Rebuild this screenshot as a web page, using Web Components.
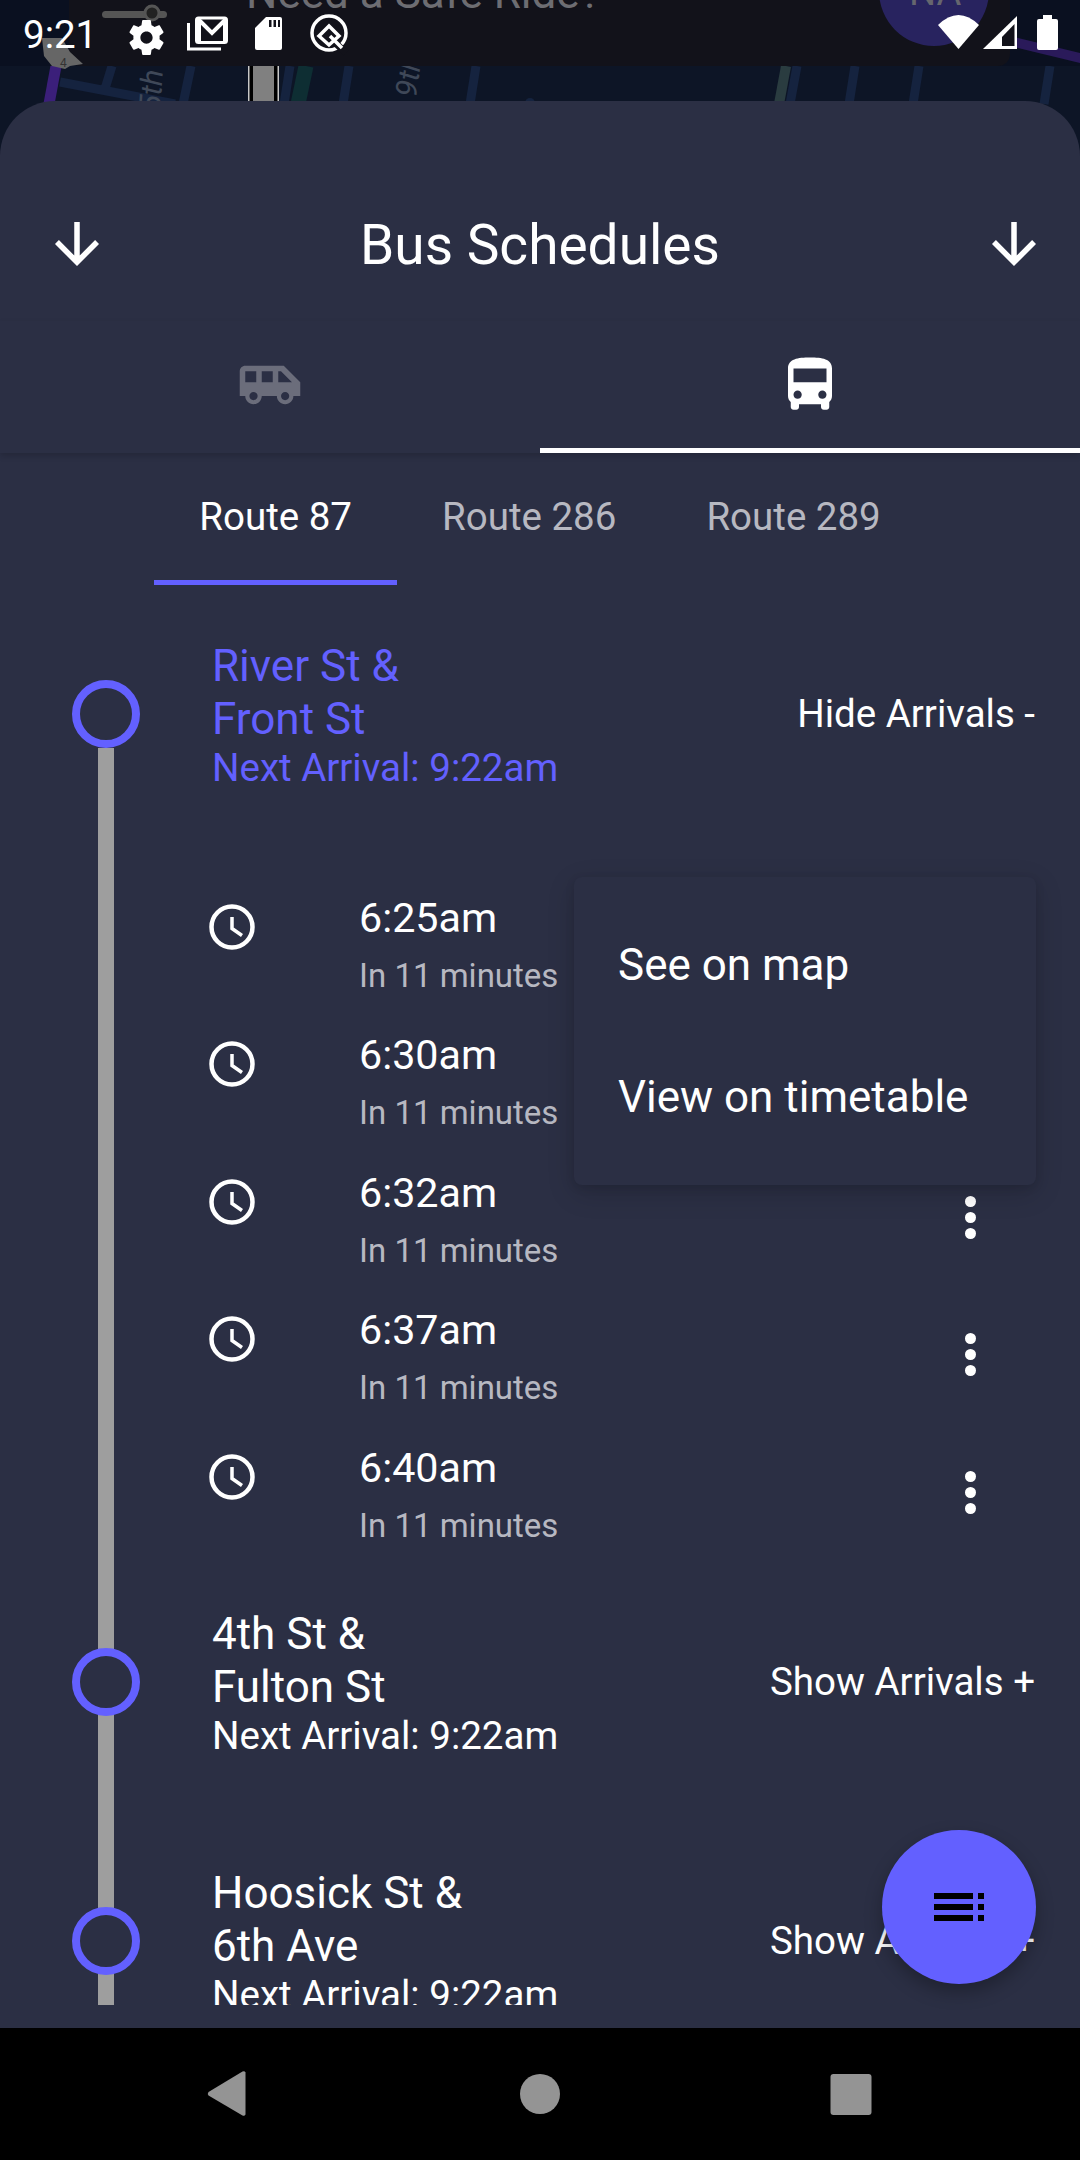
<!DOCTYPE html>
<html>
<head>
<meta charset="utf-8">
<title>Bus Schedules</title>
<style>
    html, body { margin: 0; padding: 0; background: #000; }
    body { font-family: Roboto, "Liberation Sans", sans-serif; }
</style>
</head>
<body>
<bus-app></bus-app>
<script>
const ARROW = 'M20 12l-1.41-1.41L13 16.17V4h-2v12.17l-5.58-5.59L4 12l8 8 8-8z';
const BUS = 'M4 16c0 .88.39 1.67 1 2.22V20c0 .55.45 1 1 1h1c.55 0 1-.45 1-1v-1h8v1c0 .55.45 1 1 1h1c.55 0 1-.45 1-1v-1.78c.61-.55 1-1.34 1-2.22V6c0-3.5-3.58-4-8-4s-8 .5-8 4v10zm3.5 1c-.83 0-1.5-.67-1.5-1.5S6.67 14 7.5 14s1.5.67 1.5 1.5S8.33 17 7.5 17zm9 0c-.83 0-1.5-.67-1.5-1.5s.67-1.5 1.5-1.5 1.5.67 1.5 1.5-.67 1.5-1.5 1.5zm1.5-6H6V6h12v5z';
const VAN = 'M17 5H3c-1.1 0-2 .89-2 2v9h2c0 1.65 1.34 3 3 3s3-1.35 3-3h5.5c0 1.65 1.34 3 3 3s3-1.35 3-3H23v-5l-6-6zM3 11V7h4v4H3zm3 6.5c-.83 0-1.5-.67-1.5-1.5s.67-1.5 1.5-1.5 1.5.67 1.5 1.5-.67 1.5-1.5 1.5zM13 11H9V7h4v4zm4.5 6.5c-.83 0-1.5-.67-1.5-1.5s.67-1.5 1.5-1.5 1.5.67 1.5 1.5-.67 1.5-1.5 1.5zM15 11V7h1l4 4h-5z';
const GEAR = 'M19.43 12.98c.04-.32.07-.64.07-.98s-.03-.66-.07-.98l2.11-1.65c.19-.15.24-.42.12-.64l-2-3.46c-.12-.22-.39-.3-.61-.22l-2.49 1c-.52-.4-1.08-.73-1.69-.98l-.38-2.65C14.46 2.18 14.25 2 14 2h-4c-.25 0-.46.18-.49.42l-.38 2.65c-.61.25-1.17.59-1.69.98l-2.49-1c-.23-.09-.49 0-.61.22l-2 3.46c-.13.22-.07.49.12.64l2.11 1.65c-.04.32-.07.65-.07.98s.03.66.07.98l-2.11 1.65c-.19.15-.24.42-.12.64l2 3.46c.12.22.39.3.61.22l2.49-1c.52.4 1.08.73 1.69.98l.38 2.65c.03.24.24.42.49.42h4c.25 0 .46-.18.49-.42l.38-2.65c.61-.25 1.17-.59 1.69-.98l2.49 1c.23.09.49 0 .61-.22l2-3.46c.12-.22.07-.49-.12-.64l-2.11-1.65zM12 15.5c-1.93 0-3.5-1.57-3.5-3.5s1.57-3.5 3.5-3.5 3.5 1.57 3.5 3.5-1.57 3.5-3.5 3.5z';

// map behind the sheet, with the app's own dimmed header and the status icons on top
class MapPeek extends HTMLElement {
    constructor() {
        super();
        this.attachShadow({ mode: 'open' });
        this.shadowRoot.innerHTML = `
        <style>
            :host { display: block; height: 160px; margin-bottom: -59px; position: relative; overflow: hidden; background: #0d1526; }
            svg { display: block; }
            text { font-family: Roboto, "Liberation Sans", sans-serif; }
            .clock { position: absolute; left: 23px; top: 12px; font: 38.5px/45px Roboto, sans-serif; color: #fff; }
        </style>
        <svg width="1080" height="160" viewBox="0 0 1080 160">
            <g stroke="#15233f" stroke-width="9" fill="none">
                <path d="M112 66L104 92M60 82L175 104M191 66L183 104M290 66L284 104M349 66L343 104M476 66L470 104M797 66L790 104M855 66L849 104M919 66L913 104M1050 66L1044 104"/>
            </g>
            <path d="M786 66L779 104" stroke="#2a3c40" stroke-width="10"/>
            <path d="M306 66L298 104" stroke="#0e2e33" stroke-width="15"/>
            <path d="M56 66L49 104" stroke="#3b1f7a" stroke-width="11"/>
            <circle cx="530" cy="103" r="5" fill="#15233f"/>
            <rect x="248" y="66" width="31" height="40" fill="#c8c8c8"/>
            <rect x="249.5" y="66" width="28" height="40" fill="#000"/>
            <rect x="253" y="66" width="21" height="40" fill="#808080"/>
            <text transform="translate(160 112) rotate(-86)" font-size="30" font-style="italic" fill="#3f4858">5th</text>
            <text transform="translate(416 98) rotate(-82)" font-size="30" font-style="italic" fill="#3f4858">9th</text>

            <rect width="1080" height="66" fill="#0a1020"/>
            <path d="M1010 36L1080 53V63L1010 46z" fill="#2a1a5a"/>
            <rect x="69" y="-20" width="941" height="86" rx="12" fill="#12121a"/>
            <text x="246" y="8" font-size="44" fill="#6d6d72">Need a Safe Ride?</text>
            <circle cx="934" cy="-9" r="55" fill="#28235f"/>
            <text x="909" y="5" font-size="38" fill="#66666e">NA</text>
            <path d="M42 38H62L70 52L83 64L70 66L65 69L52 66L44 56z" fill="#666"/>
            <text x="60" y="67" font-size="12" fill="#333">4</text>
            <rect x="102" y="11" width="65" height="7" rx="3.5" fill="#555"/>
            <circle cx="152" cy="13" r="7" fill="#222" stroke="#555" stroke-width="3"/>

            <path d="${GEAR}" transform="translate(125.5 16.5) scale(1.75)" fill="#fff"/>
            <path d="M188.5 23V49H221" fill="none" stroke="#fff" stroke-width="3"/>
            <rect x="196.5" y="18" width="30" height="24.5" rx="2" fill="none" stroke="#fff" stroke-width="3"/>
            <path d="M199 19L199 42M225 19V42M198 19L212 33L226 19" fill="none" stroke="#fff" stroke-width="4"/>
            <path d="M266 17H280a2 2 0 0 1 2 2V48a2 2 0 0 1-2 2H257a2 2 0 0 1-2-2V28z" fill="#fff"/>
            <path d="M269 20h2.5v7H269zM273.5 20h2.5v7H273.5zM278 20h2v7H278z" fill="#12121a"/>
            <circle cx="329" cy="33" r="17" fill="none" stroke="#fff" stroke-width="3.5"/>
            <path d="M329 37L346 53" fill="none" stroke="#12121a" stroke-width="7"/>
            <path d="M319 36L329 26L339 36L329 45zM330 36L342 48" fill="none" stroke="#fff" stroke-width="3.5"/>
            <path d="M938 25Q958.5 5 979 25L958.5 49z" fill="#fff"/>
            <path d="M1017 16V49H983z" fill="#fff"/>
            <path d="M1002 37L1014.5 24V46H1002z" fill="#12121a"/>
            <path d="M1043 15H1052V19H1056a2 2 0 0 1 2 2V48a2 2 0 0 1-2 2H1039a2 2 0 0 1-2-2V21a2 2 0 0 1 2-2H1043z" fill="#fff"/>
        </svg>
        <div class="clock">9:21</div>
        `;
    }
}
customElements.define('map-peek', MapPeek);

class SheetHeader extends HTMLElement {
    constructor() {
        super();
        this.attachShadow({ mode: 'open' });
        this.shadowRoot.innerHTML = `
        <style>
            :host { display: grid; grid-template-columns: 1fr auto 1fr; align-items: center; padding: 110px 33px 44px; color: #fff; }
            h1 { margin: 0; font: 400 55px/66px Roboto, sans-serif; transform: translateY(1px); }
            svg { display: block; width: 66px; height: 66px; fill: #fff; }
            svg:first-of-type { margin-left: 11px; }
            svg:last-of-type { margin-left: 0; justify-self: end; }
        </style>
        <svg viewBox="0 0 24 24"><path d="${ARROW}"/></svg>
        <h1><slot></slot></h1>
        <svg viewBox="0 0 24 24"><path d="${ARROW}"/></svg>
        `;
    }
}
customElements.define('sheet-header', SheetHeader);

class ModeTabs extends HTMLElement {
    constructor() {
        super();
        this.attachShadow({ mode: 'open' });
        this.shadowRoot.innerHTML = `
        <style>
            :host { display: grid; grid-template-columns: 1fr 1fr; height: 132px; box-shadow: 0 3px 6px rgba(0,0,0,.16); position: relative; }
            div { display: flex; align-items: center; justify-content: center; border-bottom: 5px solid transparent; }
            div.on { border-bottom-color: #fff; }
            svg { display: block; width: 66px; height: 66px; }
        </style>
        <div><svg viewBox="0 0 24 24" fill="#6b6d7b"><path d="${VAN}"/></svg></div>
        <div class="on"><svg viewBox="0 0 24 24" fill="#fff"><path d="${BUS}"/></svg></div>
        `;
    }
}
customElements.define('mode-tabs', ModeTabs);

class RouteTabs extends HTMLElement {
    constructor() {
        super();
        this.attachShadow({ mode: 'open' });
        this.shadowRoot.innerHTML = `
        <style>
            :host { display: flex; justify-content: center; height: 132px; }
            ::slotted(span) { display: flex; align-items: center; padding: 0 45px; border-bottom: 5px solid transparent;
                font: 400 38.5px/44px Roboto, sans-serif; color: #b7b8c1; }
            ::slotted(span.on) { color: #fff; border-bottom-color: #6360ff; }
        </style>
        <slot></slot>
        `;
    }
}
customElements.define('route-tabs', RouteTabs);

class StopRow extends HTMLElement {
    constructor() {
        super();
        this.attachShadow({ mode: 'open' });
        this.shadowRoot.innerHTML = `
        <style>
            :host { display: grid; grid-template-columns: 212px 1fr auto; align-items: center; height: 259px; padding-right: 45px; color: #fff; }
            :host([active]) { color: #6360ff; }
            i { display: block; box-sizing: border-box; width: 68px; height: 68px; margin: -2px 0 0 72px; border: 8px solid #6360ff; border-radius: 50%; background: #2b2f44; }
            .name { font: 400 44px/53px Roboto, sans-serif; }
            .next { font: 400 38.5px/44px Roboto, sans-serif; }
            .act { margin-top: -2px; font: 400 38.5px/44px Roboto, sans-serif; color: #fff; }
        </style>
        <i></i>
        <div>
            <div class="name"><slot></slot></div>
            <div class="next"><slot name="next"></slot></div>
        </div>
        <div class="act"><slot name="action"></slot></div>
        `;
    }
}
customElements.define('stop-row', StopRow);

class ArrivalRow extends HTMLElement {
    constructor() {
        super();
        this.attachShadow({ mode: 'open' });
        this.shadowRoot.innerHTML = `
        <style>
            :host { display: grid; grid-template-columns: 152px 1fr auto; height: 137.5px; margin-left: 207px; padding-right: 104px; box-sizing: border-box; color: #fff; }
            svg.clock { width: 58px; height: 58px; margin-top: 24px; fill: none; stroke: #fff; }
            .time { padding-top: 19px; font: 400 41.25px/50px Roboto, sans-serif; }
            .sub { margin-top: 11px; font: 400 33px/44px Roboto, sans-serif; color: #b7b8c1; }
            .more { display: flex; flex-direction: column; justify-content: center; gap: 5px; }
            .more b { display: block; width: 11px; height: 11px; border-radius: 50%; background: #fff; }
        </style>
        <svg class="clock" viewBox="0 0 58 58">
            <circle cx="25" cy="29" r="20.5" stroke-width="4.5"/>
            <path d="M25 19V30.5L35 37.5" stroke-width="3.5"/>
        </svg>
        <div>
            <div class="time"><slot></slot></div>
            <div class="sub"><slot name="sub"></slot></div>
        </div>
        <div class="more"><b></b><b></b><b></b></div>
        `;
    }
}
customElements.define('arrival-row', ArrivalRow);

class OverflowMenu extends HTMLElement {
    constructor() {
        super();
        this.attachShadow({ mode: 'open' });
        this.shadowRoot.innerHTML = `
        <style>
            :host { display: block; position: absolute; top: 33px; right: 44px; width: 462px; padding: 22px 0; box-sizing: border-box;
                background: #2b2f44; border-radius: 8px; color: #fff;
                box-shadow: 0 8px 28px rgba(0,0,0,.16), 0 3px 10px rgba(0,0,0,.10); }
            ::slotted(div) { height: 132px; padding-left: 44px; font: 400 44px/132px Roboto, sans-serif; }
        </style>
        <slot></slot>
        `;
    }
}
customElements.define('overflow-menu', OverflowMenu);

class MenuFab extends HTMLElement {
    constructor() {
        super();
        this.attachShadow({ mode: 'open' });
        this.shadowRoot.innerHTML = `
        <style>
            :host { display: flex; align-items: center; justify-content: center; position: absolute; right: 44px; bottom: 44px; width: 154px; height: 154px;
                border-radius: 50%; background: #6360ff; box-shadow: 0 8px 18px rgba(0,0,0,.28); }
            svg { display: block; }
        </style>
        <svg width="50" height="28" viewBox="0 0 50 28" fill="#000">
            <path d="M0 0h39v6H0zM44 0h6v6h-6zM0 11h39v6H0zM44 11h6v6h-6zM0 22h39v6H0zM44 22h6v6h-6z"/>
        </svg>
        `;
    }
}
customElements.define('menu-fab', MenuFab);

class ScheduleSheet extends HTMLElement {
    constructor() {
        super();
        this.attachShadow({ mode: 'open' });
        this.shadowRoot.innerHTML = `
        <style>
            :host { display: block; flex: 1; position: relative; background: #2b2f44; border-radius: 55px 55px 0 0; }
            .stops { position: relative; height: 1420px; overflow: hidden;
                background: linear-gradient(#9e9e9e, #9e9e9e) 98px 163px / 16px 100% no-repeat; }
        </style>
        <slot name="head"></slot>
        <div class="stops"><slot></slot></div>
        <slot name="fab"></slot>
        `;
    }
}
customElements.define('schedule-sheet', ScheduleSheet);

class ArrivalList extends HTMLElement {
    constructor() {
        super();
        this.attachShadow({ mode: 'open' });
        this.shadowRoot.innerHTML = `
        <style>
            :host { display: block; position: relative; height: 709.5px; margin-top: -.5px; padding-top: 30px; box-sizing: border-box; }
        </style>
        <slot></slot>
        `;
    }
}
customElements.define('arrival-list', ArrivalList);

class NavStrip extends HTMLElement {
    constructor() {
        super();
        this.attachShadow({ mode: 'open' });
        this.shadowRoot.innerHTML = `
        <style>
            :host { display: grid; grid-template-columns: repeat(3, 66px); justify-content: center; column-gap: 245px; align-items: center; height: 132px; background: #000; }
            svg { display: block; }
        </style>
        <svg width="66" height="66" viewBox="0 0 66 66"><path d="M46.5 10.5Q48.5 9.5 49.5 11.5V53.5Q48.5 55.5 46.5 54.5L12.5 34.5Q11 33 12.5 31z" fill="#949494"/></svg>
        <svg width="66" height="66" viewBox="0 0 66 66"><circle cx="33" cy="33" r="20" fill="#949494"/></svg>
        <svg width="66" height="66" viewBox="0 0 66 66"><rect x="12.5" y="13" width="41" height="41" rx="3" fill="#949494"/></svg>
        `;
    }
}
customElements.define('nav-strip', NavStrip);

class BusApp extends HTMLElement {
    constructor() {
        super();
        this.attachShadow({ mode: 'open' });
        this.shadowRoot.innerHTML = `
        <style>
            :host { display: flex; flex-direction: column; width: 1080px; height: 2160px; overflow: hidden; background: #000; }
        </style>
        <map-peek></map-peek>
        <schedule-sheet>
            <div slot="head">
                <sheet-header>Bus Schedules</sheet-header>
                <mode-tabs></mode-tabs>
                <route-tabs>
                    <span class="on">Route 87</span>
                    <span>Route 286</span>
                    <span>Route 289</span>
                </route-tabs>
            </div>
            <stop-row active>
                River St &amp;<br>Front St
                <span slot="next">Next Arrival: 9:22am</span>
                <span slot="action">Hide Arrivals -</span>
            </stop-row>
            <arrival-list>
                <arrival-row>6:25am<span slot="sub">In 11 minutes</span></arrival-row>
                <arrival-row>6:30am<span slot="sub">In 11 minutes</span></arrival-row>
                <arrival-row>6:32am<span slot="sub">In 11 minutes</span></arrival-row>
                <arrival-row>6:37am<span slot="sub">In 11 minutes</span></arrival-row>
                <arrival-row>6:40am<span slot="sub">In 11 minutes</span></arrival-row>
                <overflow-menu>
                    <div>See on map</div>
                    <div>View on timetable</div>
                </overflow-menu>
            </arrival-list>
            <stop-row>
                4th St &amp;<br>Fulton St
                <span slot="next">Next Arrival: 9:22am</span>
                <span slot="action">Show Arrivals +</span>
            </stop-row>
            <stop-row>
                Hoosick St &amp;<br>6th Ave
                <span slot="next">Next Arrival: 9:22am</span>
                <span slot="action">Show Arrivals +</span>
            </stop-row>
            <menu-fab slot="fab"></menu-fab>
        </schedule-sheet>
        <nav-strip></nav-strip>
        `;
    }
}
customElements.define('bus-app', BusApp);
</script>
</body>
</html>
